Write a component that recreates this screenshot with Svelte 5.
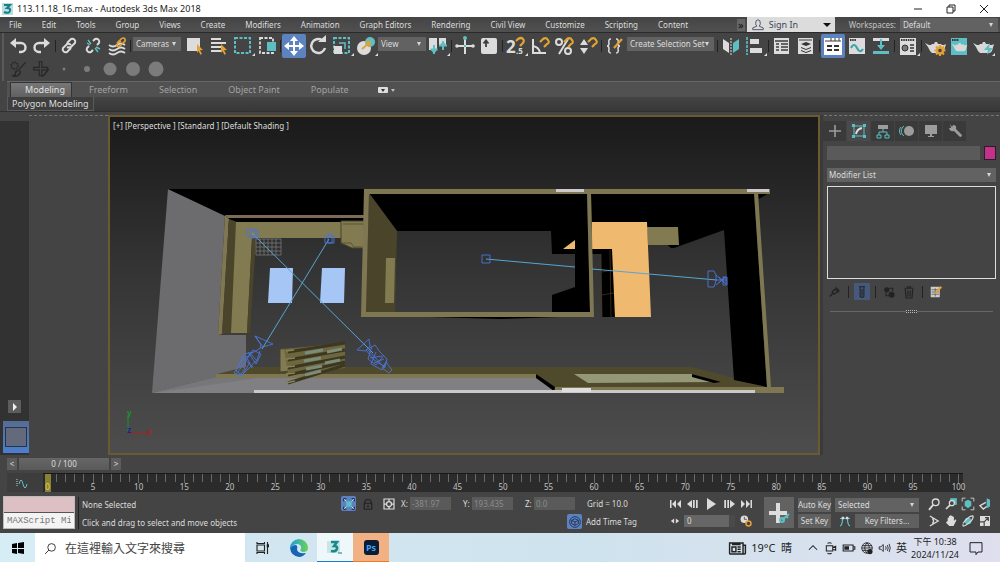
<script lang="ts">
  const menus = ['File', 'Edit', 'Tools', 'Group', 'Views', 'Create', 'Modifiers', 'Animation', 'Graph Editors', 'Rendering', 'Civil View', 'Customize', 'Scripting', 'Content'];
  const ribbonTabs = ['Modeling', 'Freeform', 'Selection', 'Object Paint', 'Populate'];
  const frames = Array.from({ length: 101 }, (_, i) => i);
  const panelTabs = ['create', 'modify', 'hierarchy', 'motion', 'display', 'utilities'];
  const brushes = [3, 6, 13, 14, 15];

  // "|" is a separator, "sel:" a drop-down, everything else an icon button
  const toolbar = [
    'undo', 'redo', '|', 'link', 'unlink', 'bind', '|', 'sel:Cameras', 'pick', 'byname', 'rect', 'window', '|',
    'move', 'rotate', 'scale', 'place', 'sel:View', 'pivot', '|', 'manipulate', 'keyboard', '|',
    'snap', 'angle', 'percent', 'spinner', '|', 'editsets', 'sel:Create Selection Set', '|', 'mirror', 'align', '|',
    'explorer', 'layers', '|', 'ribbon', 'curve', 'schematic', '|', 'material', '|', 'rsetup', 'rframe', 'render'
  ];
  const flyouts = ['rect', 'scale', 'place', 'pivot', 'snap', 'align', 'material', 'render'];
  const activeTools = ['move', 'ribbon'];

  const T = '#5dbfc4';
  const A = '#e3a233';
  const teapot = '<path fill="#d8d8d8" d="M2 9l4 2h2l1-1h2l1-2h2l1 2h3l1 1h2l2-1-2 7-2 2H9l-2-2-2-4z"/>';

  const icons: Record<string, string> = {
    undo: '<path d="M8 9h7a4 4 0 0 1 0 9h-2" fill="none" stroke="currentColor" stroke-width="2.4"/><path d="M4 9l6-5v10z"/>',
    redo: '<path d="M16 9H9a4 4 0 0 0 0 9h2" fill="none" stroke="currentColor" stroke-width="2.4"/><path d="M20 9l-6-5v10z"/>',
    link: '<g fill="none" stroke="currentColor" stroke-width="2"><path d="M10 9l4-4a3 3 0 0 1 4 4l-4 4q-2 1-4 0"/><path d="M14 11q-2-2-4-1l-4 4a3 3 0 0 0 4 4l4-4"/></g>',
    unlink: `<g fill="none" stroke="currentColor" stroke-width="2"><path d="M12 7l2-2a3 3 0 0 1 4 4l-2 2M8 12l-2 2a3 3 0 0 0 4 4l2-2"/></g><path d="M7 6l3 4M6 9l3 2M14 14l3 4M15 13l4 2" stroke="${T}" stroke-width="1.4"/>`,
    bind: `<path d="M4 11q4 3 8 0t8 0M4 15q4 3 8 0t8 0M4 19q4 3 8 0t8 0" fill="none" stroke="currentColor" stroke-width="1.8"/><path d="M12 9l4-4q3-2 4 0t-2 4l-3 3q-2 1-3 0t1-3l3-2" fill="none" stroke="${A}" stroke-width="1.6"/>`,
    pick: `<path d="M4 4h13v13H4z"/><path d="M14 10l6 6-3 .2 2 3.8-1.6.8-1.9-3.8-1.5 2z" fill="${A}"/>`,
    byname: `<path d="M4 4h10v2H4zM4 8h15v2H4zM4 12h10v2H4zM4 16h10v2H4z"/><path d="M14 10l6 6-3 .2 2 3.8-1.6.8-1.9-3.8-1.5 2z" fill="${A}"/>`,
    rect: `<path d="M4 4h15v15H4z" fill="none" stroke="${T}" stroke-width="2" stroke-dasharray="3 1.5"/>`,
    window: `<path d="M5 4h13v15H5z" fill="none" stroke="currentColor" stroke-width="1.8" stroke-dasharray="3 1.5"/><path d="M12 8h9v9h-9z" fill="${T}"/>`,
    move: '<path d="M11 7h2v4h4V8l5 4-5 4v-3h-4v4h3l-4 5-4-5h3v-4H7v3l-5-4 5-4v3h4V7H8l4-5 4 5z"/>',
    rotate: '<path d="M16 6a7 7 0 1 0 3 8" fill="none" stroke="currentColor" stroke-width="2.5"/><path d="M12 8h8V1z"/>',
    scale: `<path d="M4 4h15v15H4z" fill="none" stroke="${T}" stroke-width="2" stroke-dasharray="3 1.5"/><path d="M4 12h8v8H4z"/><path d="M9 9h6v6" fill="none" stroke="${T}" stroke-width="1.5"/>`,
    place: `<circle cx="10" cy="14" r="7"/><circle cx="16" cy="8" r="5" fill="${T}"/><path d="M8 15l7-6M11 8l5 0-1 5" fill="none" stroke="${A}" stroke-width="1.8"/>`,
    pivot: `<path d="M3 4h8v12H3zM13 4h7v8h-7z"/><path d="M8 11v9M4.500 15.500h7M17 7v9M13 11.500h8" stroke="${T}" stroke-width="2"/><path d="M5 16h6l-3 4zM14 11h6l-3-4z" fill="${T}"/>`,
    manipulate: `<path d="M11 4h2v7h7v2h-7v7h-2v-7H4v-2h7z"/><circle cx="12" cy="4" r="2" fill="${T}"/><circle cx="20" cy="12" r="1.8"/><circle cx="4" cy="12" r="1.8"/><path d="M11 11h2v2h-2z" fill="${T}"/>`,
    keyboard: '<rect x="4" y="4" width="16" height="16" rx="2"/><path d="M9 13V7M6.500 9.500l2.500-3 2.500 3" fill="none" stroke="#3d3d3d" stroke-width="1.8"/>',
    snap: `<text x="2" y="19" font-size="17" font-weight="700" fill="currentColor">2</text><text x="12" y="20" font-size="8" font-weight="700" fill="currentColor">.5</text><path d="M12 7l2-2q3-2 5 0t-1 5l-2 2" fill="none" stroke="${A}" stroke-width="2.2"/>`,
    angle: `<path d="M5 5v14h13M5 12q6 1 7 7" fill="none" stroke="currentColor" stroke-width="2"/><path d="M12 8l3-3q3-2 5 1t-1 4l-3 3" fill="none" stroke="${A}" stroke-width="2.2"/>`,
    percent: `<g fill="none" stroke="currentColor" stroke-width="2"><circle cx="7" cy="8" r="3"/><circle cx="16" cy="17" r="3"/><path d="M16 5L7 20"/></g><path d="M12 8l3-3q3-2 5 1t-1 4l-3 3" fill="none" stroke="${A}" stroke-width="2.2"/>`,
    spinner: `<path d="M4 11l4-6 4 6zM4 14h8l-4 6z"/><path d="M12 8l3-3q3-2 5 1t-1 4l-3 3" fill="none" stroke="${A}" stroke-width="2.2"/>`,
    editsets: `<path d="M8 5Q5 5 6 9q0 3-2 3 2 0 2 3-1 4 2 4M13 5q3 0 2 4 0 3 2 3-2 0-2 3 1 4-2 4" fill="none" stroke="currentColor" stroke-width="1.5"/><path d="M11 14l8-9" stroke="${A}" stroke-width="2.2"/>`,
    mirror: `<path d="M4 5l6 4v10l-6-4z"/><path d="M12 4v17" stroke="currentColor" stroke-dasharray="2 1"/><path d="M14 9l6-4v10l-6 4z" fill="${T}"/>`,
    align: `<path d="M4 3v18" stroke="${T}" stroke-width="1.6" stroke-dasharray="3 1"/><path d="M7 5h9v5H7zM7 14h12v5H7z"/>`,
    explorer: '<path d="M4 4h15v16H4z"/><path d="M5 7h13M6 10h3M11 10h7M6 13h3M11 13h7M6 16h3M11 16h7" stroke="#3d3d3d" stroke-width="1.4"/>',
    layers: '<path d="M4 4h15v16H4z"/><path d="M5 6h13" stroke="#3d3d3d"/><path d="M12 8l5 2-5 2-5-2zM7 13l5 2 5-2v1l-5 2-5-2zM7 16l5 2 5-2v1l-5 2-5-2z" fill="#333"/>',
    ribbon: '<path d="M3 4h18v17H3z"/><path d="M10 4v3H4M10 7h10M14 4v3M18 4v3" fill="none" stroke="#3d3d3d"/><path d="M6 12h5M6 16h5M13 12h5M13 16h5" stroke="#333" stroke-width="2"/>',
    curve: `<path d="M4 4h16v16H4z"/><path d="M5 6h6" stroke="#333" stroke-width="2" stroke-dasharray="1.5 .7"/><path d="M6 14q3-6 6 0t6 1" fill="none" stroke="#3ba5ab" stroke-width="2.2"/>`,
    schematic: `<path d="M4 4h16v3H4z"/><path d="M4 17h16v3H4zM11 5h2v6h3l-4 5-4-5h3z" fill="${T}"/>`,
    material: '<path d="M4 4h16v17H4z"/><path d="M5 6h14" stroke="#333" stroke-width="2" stroke-dasharray="1.5 .8"/><circle cx="9" cy="14" r="3" fill="#777" stroke="#333"/><path d="M14 11h4M14 14h4M14 17h4" stroke="#333" stroke-width="1.4"/>',
    rsetup: `${teapot}<path d="M17 11v11M11.500 16.500h11M13 12.500l8 8M21 12.500l-8 8" stroke="${A}" stroke-width="2"/><circle cx="17" cy="16.500" r="3" fill="#444" stroke="${A}" stroke-width="2.400"/>`,
    rframe: `<path d="M4 4h16v17H4z" fill="${T}"/><path d="M5 6h7" stroke="#333" stroke-width="2" stroke-dasharray="1.5 .7"/><g transform="translate(3 3) scale(.75)">${teapot}</g>`,
    render: `${teapot}<path d="M19 9l-6 7h4l-1 5 6-7h-4z" fill="${T}"/>`,
    create: '<path d="M12 6v12M6 12h12" stroke="currentColor" stroke-width="1.6"/>',
    modify: `<path d="M7 7h10v10H7z" fill="none" stroke="${T}"/><path d="M5 5h3v3H5zM16 5h3v3h-3zM5 16h3v3H5zM16 16h3v3h-3z" fill="${T}"/><path d="M9 15q1-5 6-6" fill="none" stroke="#ddd" stroke-width="2"/>`,
    hierarchy: `<path d="M7 6h10v4H7z"/><path d="M12 10v3M8 16v-3h8v3M6 16h4v3H6zM14 16h4v3h-4z" fill="none" stroke="${T}"/>`,
    motion: `<circle cx="14" cy="12" r="5"/><path d="M9 7a6 6 0 0 0 0 10M6 8a6 6 0 0 0 0 8" fill="none" stroke="${T}"/>`,
    display: '<path d="M6 6h12v9H6zM11 15h2v2h2v1H9v-1h2z"/>',
    utilities: '<path d="M7 5l2 3 1-2q4 0 3 4l6 6q0 2-2 2l-6-6q-4 1-5-3l2 0z"/>',
    pin: '<path d="M13 6l5 5M12 8l4 4-3 1-2 2-3-3 2-2zM9 14l-4 4" fill="none" stroke="currentColor" stroke-width="1.6"/>',
    tube: '<path d="M8 5h8M9.500 5v13q2.500 2 5 0V5M12 8v9" fill="none" stroke="currentColor" stroke-width="1.4"/>',
    unique: '<circle cx="9" cy="9" r="3.500"/><path d="M12 7h5v4M8 13v4h4" fill="none" stroke="currentColor" stroke-width="1.400"/><circle cx="15.500" cy="15.500" r="4"/>',
    trash: '<path d="M6 7h12M10 7V5h4v2M7 8l1 12h8l1-12M10.500 10v8M13.500 10v8" fill="none" stroke="currentColor" stroke-width="1.5"/>',
    config: `<path d="M5 5h12v14H5z" fill="#ccc"/><path d="M6 9h10M6 12h10M6 15h10M11 7v11" stroke="#555"/><path d="M11 14l8-9" stroke="${A}" stroke-width="2.600"/>`,
    cube: '<g fill="none" stroke="#1e2d4d" stroke-width="1.300"><circle cx="12" cy="12" r="8"/><path d="M7 9.500l5-2.500 5 2.500v5L12 17l-5-2.500zM7 9.500l5 2.500 5-2.500M12 12v5"/></g>',
    isolate: `<path d="M4 8V4h4M16 4h4v4M20 16v4h-4M8 20H4v-4" fill="none" stroke="#1d2b45" stroke-width="1.500"/><path d="M8 8h8v8H8z" fill="${T}"/><path d="M5 5l3 3M19 5l-3 3M5 19l3-3M19 19l-3-3" stroke="#ddd" stroke-width="1.500"/>`,
    lock: '<path d="M8 11V9a4 3 0 0 1 8 0v2M7 11h10v8H7zM12 13v4" fill="none" stroke="currentColor" stroke-width="1.6"/>',
    absolute: '<path d="M6 6h12v12H6z" fill="none" stroke="currentColor" stroke-width="1.400"/><circle cx="12" cy="12" r="3" fill="none" stroke="currentColor" stroke-width="1.500"/><path d="M12 6v3M12 15v3M6 12h3M15 12h3" stroke="currentColor" stroke-width="1.500"/>',
    start: '<path d="M7 8h1.5v8H7zM13 8v8l-4-4zM18 8v8l-4-4z"/>',
    prev: '<path d="M11 8v8l-5-4zM12 8h1.7v8H12zM15 8h1.7v8H15z"/>',
    play: '<path d="M8 6l9 6-9 6z"/>',
    next: '<path d="M13 8v8l5-4zM10.300 8H12v8h-1.700zM7.300 8H9v8H7.300z"/>',
    end: '<path d="M17 8h-1.500v8H17zM11 8v8l4-4zM6 8v8l4-4z"/>',
    keymode: '<path d="M11 9v6l-4-3zM13 9v6l4-3z"/>',
    timecfg: `<circle cx="10" cy="10" r="4.500"/><path d="M10 7v3h3" fill="none" stroke="#444"/><circle cx="15" cy="15" r="3" fill="#444" stroke="${A}" stroke-width="1.800"/>`,
    tangent: `<path d="M6 18q3-1 3-9h6q0 8 3 9M6 9h12" fill="none" stroke="${T}" stroke-width="1.400"/><path d="M8 7h3v3H8zM13 7h3v3h-3z"/>`,
    zoom: '<circle cx="14" cy="10" r="4" fill="none" stroke="currentColor" stroke-width="1.600"/><path d="M11 13l-5 6" stroke="currentColor" stroke-width="2.200"/>',
    zoomall: `<path d="M11 5h8v8h-8z" fill="${T}"/><circle cx="13" cy="11" r="3" fill="#444" stroke="currentColor" stroke-width="1.500"/><path d="M11 13l-5 5" stroke="currentColor" stroke-width="2"/>`,
    extents: `<path d="M5 9V5h4M15 5h4v4M19 15v4h-4M9 19H5v-4" fill="none" stroke="currentColor"/><path d="M12 7l4 2v5l-4 3-4-3V9z" fill="${T}"/>`,
    extall: `<path d="M14 5l4 2v8l-4 2z" fill="${T}"/><path d="M13 10l-7 4 4 4 4-3" fill="none" stroke="currentColor" stroke-width="1.600"/>`,
    fov: '<path d="M7 6l10 6-10 6M10 9q3 3 0 6" fill="none" stroke="currentColor" stroke-width="1.600"/>',
    pan: '<path d="M8 12V8h1.500V6H11V5h1.500v1H14v1h1.500v5l1.500-2 1.500 1-3.500 7h-5L6 14l1-1.500z"/>',
    orbit: `<circle cx="12" cy="12" r="4" fill="${T}"/><path d="M6 16q-1 4 5 0 6-4 7-8t-4-1-8 8" fill="none" stroke="currentColor" stroke-width="1.500"/>`,
    maxtoggle: '<path d="M6 6h12v12H6z"/><path d="M12 8h4v4M16 8l-5 5M6 13h5v5" fill="none" stroke="#444" stroke-width="1.400"/>',
    paint: '<circle cx="8" cy="8" r="4" fill="none" stroke="currentColor" stroke-width="2" stroke-dasharray="2 1"/><path d="M21 4l-9 10M12 14q-3 0-3 3t-4 3q5 2 8-1t1-5" fill="none" stroke="currentColor" stroke-width="1.600"/>',
    addpaint: '<path d="M10 3h3v7h7v3h-7v7h-3v-7H3v-3h7z" fill="none" stroke="currentColor" stroke-width="1.300"/><path d="M21 12l-5 7-3 2" fill="none" stroke="currentColor" stroke-width="1.800"/>',
    chevron: '<path d="M5 15l7-7 7 7" fill="none" stroke="currentColor" stroke-width="1.800"/>',
    meet: '<g fill="none" stroke="currentColor" stroke-width="1.800"><path d="M4 8h11v9H4zM15 11l5-2v7l-5-2M6 4q4-2 7 0M6 21q4 2 7 0"/></g>',
    battery: '<path d="M2 7h17v10H2zM20 10h2v4h-2" fill="none" stroke="currentColor" stroke-width="1.800"/><path d="M4 9h8v6H4z"/>',
    globe: '<g fill="none" stroke="currentColor" stroke-width="1.500"><circle cx="12" cy="12" r="9"/><path d="M3 12h18M4 8h16M4 16h16M12 3q-8 9 0 18M12 3q4 4 4 9"/></g><circle cx="17" cy="18" r="4.500"/>',
    volume: '<g fill="none" stroke="currentColor" stroke-width="1.500"><path d="M2 10h3l4-4v12l-4-4H2zM13 9q2 3 0 6M16 7q3 5 0 10M19 5q4 7 0 14"/></g>',
    news: '<g fill="none" stroke="currentColor" stroke-width="1.800"><path d="M2 5h17v14H3q-1 0-1-1zM19 8h3v10q0 1-3 1M5 10h5v6H5zM5 7h11M12 10h4M12 13h4M12 16h4"/></g>',
    notice: '<path d="M3 4h18v14h-6l-3 4v-4H3z" fill="none" stroke="currentColor" stroke-width="1.500"/>',
    taskview: '<g fill="none" stroke="currentColor" stroke-width="1.500"><path d="M4 8h10v8H4zM4 4v2h10V4M4 20v-2h10v2M18 4v16"/></g><path d="M17 7h3v4h-3z"/>',
    search: '<circle cx="14" cy="10" r="7" fill="none" stroke="currentColor" stroke-width="1.600"/><path d="M9 15l-7 7" stroke="currentColor" stroke-width="1.600"/>',
    user: '<path d="M12 3q4 0 4 6 0 3-2 5l7 3v3H3v-3l7-3q-2-2-2-5 0-6 4-6z" fill="none" stroke="#4a5164" stroke-width="1.600"/>'
  };
</script>

{#snippet icon(name: string, size = 24)}
  <svg width={size} height={size} viewBox="0 0 24 24" fill="currentColor" aria-hidden="true">{@html icons[name]}</svg>
{/snippet}

<div class="app">
  <header class="titlebar">
    <svg width="11" height="12" viewBox="0 0 11 12"><path fill="#b9dfe0" d="M0 0h11v12H0z" /><path fill="none" stroke="#177f88" stroke-width="2" d="M2 2h6L5 5q4 0 3 3T2 9" /></svg>
    <h1>113.11.18_16.max - Autodesk 3ds Max 2018</h1>
    <div class="window_buttons">
      <button aria-label="Minimize"><svg width="10" height="10"><path d="M1 5h8" /></svg></button>
      <button aria-label="Restore"><svg width="10" height="10"><path d="M1 3h6v6H1zM3 3V1h6v6H7" /></svg></button>
      <button aria-label="Close"><svg width="10" height="10"><path d="M1 1l8 8M9 1L1 9" /></svg></button>
    </div>
  </header>

  <nav class="menubar">
    <div class="menus">
      {#each menus as item}
        <button>{item}</button>
      {/each}
    </div>
    <button class="more" aria-label="More menus">»</button>
    <button class="signin">{@render icon('user', 14)}<span>Sign In</span><i class="arrow"></i></button>
    <label for="workspace">Workspaces:</label>
    <span class="select workspace"><select id="workspace"><option>Default</option></select></span>
  </nav>

  <div class="toolbar">
    {#each toolbar as tool}
      {#if tool === '|'}
        <i class="sep"></i>
      {:else if tool.startsWith('sel:')}
        <span class="select" class:wide={tool.length > 15}>
          <select aria-label={tool.slice(4)}><option>{tool.slice(4)}</option></select>
        </span>
      {:else}
        <button class="tool" class:active={activeTools.includes(tool)} class:flyout={flyouts.includes(tool)} aria-label={tool}>{@render icon(tool)}</button>
      {/if}
    {/each}
  </div>

  <div class="brushbar">
    <button class="tool" aria-label="Paint">{@render icon('paint', 20)}</button>
    <button class="tool" aria-label="Add">{@render icon('addpaint', 20)}</button>
    {#each brushes as size}
      <button class="tool" aria-label="Brush {size}"><svg width="20" height="20"><circle cx="10" cy="10" r={size / 2} /></svg></button>
    {/each}
  </div>

  <div class="ribbon">
    <div class="ribbon_tabs">
      {#each ribbonTabs as tab, i}
        <button class:current={i === 0}>{tab}</button>
      {/each}
      <button class="ribbon_toggle" aria-label="Toggle ribbon"><svg width="18" height="8"><rect width="10" height="6" y="1" rx="1" fill="#ddd" /><path d="M3 3h4L5 6z" fill="#333" /><path d="M13 3h4l-2 3z" fill="#bbb" /></svg></button>
    </div>
    <div class="ribbon_body"><button>Polygon Modeling</button></div>
  </div>

  <main>
    <aside class="strip">
      <button class="expand" aria-label="Expand"><svg width="6" height="8"><path d="M1 0l4 4-4 4z" fill="#eee" /></svg></button>
      <button class="layout" aria-label="Viewport layout"><span></span></button>
    </aside>
    <div class="gutter"></div>

    <section class="viewport">
      <p>[+] [Perspective ] [Standard ] [Default Shading ]</p>
      <svg class="scene" viewBox="110 117 708 336">
        <!-- side wall and outer slab -->
        <path fill="#6c6c6e" d="M168 189l57 26-7 120h28v34l-29 8-65 16z" />
        <path fill="#808082" d="M152 393l65-16h320l19 16z" />
        <path fill="#777779" d="M152 393l65-16 40 1-40 6z" />
        <path fill="#000" d="M168 189h197v27H225z" />
        <!-- left room cabinets -->
        <path fill="#000" d="M226 216h138v12H228z" />
        <path fill="#7e7751" d="M225 215l4 4-7 115-4 1z" />
        <path fill="#7e6a58" d="M225 215h139v3H228z" />
        <path fill="#4a452a" d="M229 219l8 3-6 111-9 1z" />
        <path fill="#827a50" d="M236 222h105v16h-89l-5 95h-16z" />
        <path fill="#4a452a" d="M252 238l4 1-6 94-19 1 16-1z" />
        <path fill="#827a50" stroke="#4a452a" d="M341 221h23v27h-12l-11-5z" />
        <path fill="none" stroke="#5b5432" d="M343 224h21M341 243h10l3 4h10" />
        <path fill="none" stroke="#8b8b8b" stroke-width=".6" d="M256 239h25v16h-25zM260 239v16M264 239v16M268 239v16M272 239v16M276 239v16M256 243h25M256 247h25M256 251h25" />
        <path fill="#a6c7f5" d="M270 268h23l-1 35h-24zM322 268h23l-1 35h-24z" />
        <!-- front wall -->
        <path fill="#4f4a2c" d="M217 374l28-7h447l76 20-213 1-18-13z" />
        <path fill="#7e7751" d="M216 374h321v4H216zM555 387h229v6H555z" />
        <path fill="#000" d="M536 374l19 13-1 4-18-13z" />
        <path fill="#949778" d="M574 374h118l25 8-129 1z" />
        <path fill="#000" d="M692 374l29 8-7 1-22-6z" />
        <path fill="#c9c9c9" d="M254 390h501v3H254z" />
        <path fill="#dedede" d="M562 388h29v4h-29z" />
        <!-- middle room -->
        <path fill="#000" d="M369 193h218l3 120h-38v-18l23-8v-33h-23l-1-23H397z" />
        <path fill="#4a452a" d="M369 193l28 38-2 82h-29z" />
        <path fill="#827a50" d="M386 258h9l-1 45h-9z" />
        <path fill="#efb970" d="M563 249l12-9v9z" />
        <path fill="#000" d="M430 317h130l-60 2z" />
        <!-- right room -->
        <path fill="#000" d="M591 193h163l13 194-33-7-10-150-50 18h-3l-22-20h-57z" />
        <path fill="#827a50" d="M647 227h31l1 18h-31z" />
        <path fill="#000" d="M592 249h21l2 68h-13l-1-63h-9z" />
        <path fill="none" stroke="#57402a" stroke-width=".6" d="M601 254l1 63M610 250l1 67M602 295l12-2M602 272l10-2" />
        <path fill="#efb970" d="M592 222h55l4 95h-36l-3-68h-20z" />
        <path fill="#000" d="M758 193h11l-10 6z" />
        <path fill="#7e7751" d="M364 189h406v5H369l-3 118h224l-3-119h4l3 124H361zM754 193h4l13 194h-4z" />
        <path fill="#cdc9cc" d="M556 189h28v3h-28zM747 189h22v3h-22z" />
        <!-- leaning panels -->
        <path fill="#827a50" stroke="#4a452a" d="M280 349l13-1-3 23-10 1z" />
        <path fill="#6d663f" d="M284 349l61-6v25l-57 6z" />
        <path stroke="#3c3820" stroke-width="3" d="M288 352l57-9M288 360l57-10M288 368l57-11M288 375l57-13M288 383l57-18" />
        <path stroke="#7d8c78" stroke-width="3" d="M305 353l18-3M327 352l15-3M304 361l17-3M306 369l16-3M325 363l15-3M305 375l16-4" />
        <path stroke="#8a8156" stroke-width="1.500" d="M286 351l8-1M286 359l9-1M286 367l9-1M286 374l9-1M286 383l9-2" />
        <!-- cameras with their targets -->
        <path fill="none" stroke="#57a5d3" d="M252 233l121 120M329 239l-67 110M486 259l89 8M592 269l125 11" />
        <g fill="none" stroke="#4c74d8" stroke-width=".9">
          <path d="M247 229h9v7h-9zM250 231h8v7h-8zM325 236h9v7h-9zM328 234h4v9h-4zM482 255h8v8h-8z" />
          <path d="M255 336l18 8-10 3zM255 336l6 9-1 3M262 347l-8 5-10 2-8 17 6 4 15-15 3-9M248 352l8 12 5-10-8-4-12 18-5 6 6 2 8-14M243 358l10 9M239 363l14-11M234 373l5-8 6 3-5 8zM246 356l6 12M250 353l8 9" />
          <path d="M369 339l-12 11 9 1 4-5zM366 350l9-5 5 7 7 7-2 8-11-7-8-10M368 350l17 18M372 346l-4 13 8 6 8-10M376 352l-5 12 11 6 5-9M382 368l4-6 6 8-3 3zM370 358l12-2M374 363l10-4" />
          <path d="M708 271h6l2 4v6l-2 6h-6zM716 275l10 9v-7l-10 8M715 280h12v-3h-4v8h4v-5M719 277l5 6M719 283l5-6" />
        </g>
        <!-- axis tripod -->
        <path stroke="#1c8f2a" d="M128 433v-18" /><path stroke="#a02525" d="M128 433h20" />
        <text x="127" y="416" fill="#1c8f2a">y</text><text x="147" y="435" fill="#a02525">x</text><text x="127" y="433" fill="#2020a0">z</text>
      </svg>
    </section>

    <aside class="panel">
      <div class="grip"></div>
      <div class="panel_tabs">
        {#each panelTabs as tab}
          <button class:current={tab === 'modify'} aria-label={tab}>{@render icon(tab)}</button>
        {/each}
      </div>
      <div class="name_row">
        <input aria-label="Object name" />
        <button class="swatch" aria-label="Object colour"></button>
      </div>
      <span class="select modifier"><select aria-label="Modifier List"><option>Modifier List</option></select></span>
      <div class="stack"></div>
      <div class="stack_tools">
        <button aria-label="Pin stack">{@render icon('pin', 18)}</button><i class="sep"></i>
        <button class="active" aria-label="Show end result">{@render icon('tube', 18)}</button><i class="sep"></i>
        <button aria-label="Make unique">{@render icon('unique', 18)}</button>
        <button aria-label="Remove modifier">{@render icon('trash', 18)}</button><i class="sep"></i>
        <button aria-label="Configure sets">{@render icon('config', 18)}</button>
      </div>
      <div class="rollup"><span></span></div>
    </aside>
  </main>

  <div class="timeslider">
    <button aria-label="Previous frame">&lt;</button>
    <button class="thumb">0 / 100</button>
    <button aria-label="Next frame">&gt;</button>
  </div>

  <div class="trackbar">
    <button class="mini_curve" aria-label="Mini curve editor"><svg width="12" height="10"><path d="M1 1v8" stroke="#ccc" stroke-dasharray="1 1" /><path d="M3 6q2-8 4 0t4 0" fill="none" stroke="#5dbfc4" /></svg></button>
    <div class="track">
      {#each frames as f}
        <span class:major={f % 5 === 0} class:now={f === 0}>{f % 5 === 0 ? f : ''}</span>
      {/each}
    </div>
  </div>

  <footer class="status">
    <div class="script">
      <div class="macro"></div>
      <input aria-label="MAXScript listener" value="MAXScript Mini Listener" />
    </div>
    <div class="prompt">
      <p>None Selected</p>
      <p>Click and drag to select and move objects</p>
    </div>
    <div class="coords">
      <div class="coord_row">
        <button class="active" aria-label="Isolate">{@render icon('isolate', 16)}</button>
        <button class="dim" aria-label="Lock">{@render icon('lock', 18)}</button>
        <button aria-label="Absolute mode">{@render icon('absolute', 20)}</button>
        <label for="cx">X:</label><input id="cx" value="-381.97" />
        <label for="cy">Y:</label><input id="cy" value="193.435" />
        <label for="cz">Z:</label><input id="cz" value="0.0" />
        <span>Grid = 10.0</span>
      </div>
      <div class="tag_row">
        <button class="active" aria-label="Adaptive degradation">{@render icon('cube', 16)}</button>
        <button class="tag">Add Time Tag</button>
      </div>
    </div>
    <div class="playback">
      <div class="row">
        {#each ['start', 'prev', 'play', 'next', 'end'] as b}
          <button aria-label={b}>{@render icon(b)}</button>
        {/each}
      </div>
      <div class="row">
        <button aria-label="Key mode">{@render icon('keymode', 20)}</button>
        <input type="text" aria-label="Current frame" value="0" />
        <button aria-label="Time configuration">{@render icon('timecfg', 20)}</button>
      </div>
    </div>
    <button class="setkeys" aria-label="Set keys"><svg width="30" height="30"><path fill="#ddd" d="M12 5h4v8h7v4h-7v8h-4v-8H5v-4h7z" /><path fill="none" stroke="#5dbfc4" stroke-width="2" d="M25 16l-7 6M22 18l2 2" /><circle cx="18" cy="22" r="2" fill="none" stroke="#5dbfc4" stroke-width="2" /></svg></button>
    <div class="keys">
      <button>Auto Key</button>
      <span class="select"><select aria-label="Key set"><option>Selected</option></select></span>
      <button>Set Key</button>
      <div class="filters"><button class="plain" aria-label="Tangents">{@render icon('tangent', 20)}</button><button class="fill">Key Filters...</button></div>
    </div>
    <div class="nav">
      {#each ['zoom', 'zoomall', 'extents', 'extall', 'fov', 'pan', 'orbit', 'maxtoggle'] as n}
        <button aria-label={n}>{@render icon(n, 20)}</button>
      {/each}
    </div>
  </footer>

  <div class="taskbar">
    <button class="start" aria-label="Start"><svg width="12" height="12"><path d="M0 2l5-1v5H0zM6 1l6-1v6H6zM0 7h5v5l-5-1zM6 7h6v5l-6-1z" /></svg></button>
    <label class="search">{@render icon('search', 13)}<input placeholder="在這裡輸入文字來搜尋" aria-label="搜尋" /></label>
    <button class="app_button" aria-label="Task view">{@render icon('taskview', 18)}</button>
    <button class="app_button" aria-label="Edge">
      <svg width="18" height="18" viewBox="0 0 18 18">
        <defs><linearGradient id="edge"><stop stop-color="#1e9be0" /><stop offset="1" stop-color="#6ad352" /></linearGradient></defs>
        <path fill="url(#edge)" d="M0 9a9 9 0 0 1 18 0q0 4-5 4-4-1-2-3 1-4-3-5-5 0-8 4z" />
        <path fill="#1565b5" d="M0 9q2-3 6-3 2 1 1 4 0 5 9 4-3 4-7 4-8-1-9-9z" />
      </svg>
    </button>
    <button class="app_button max" aria-label="3ds Max"><svg width="16" height="16"><path fill="#c8e6e6" d="M0 2h13v12H0z" /><path fill="none" stroke="#188a8f" stroke-width="2.500" d="M4 3h6L7 7q4 0 3 3t-6 2" /><path fill="#7bb" d="M11 13h4v2h-4z" /></svg></button>
    <button class="app_button ps"><span>Ps</span></button>
    <div class="tray">
      {@render icon('news', 19)}
      <span class="weather">19°C&nbsp; 晴</span>
      {@render icon('chevron', 14)}
      {@render icon('meet', 14)}
      {@render icon('battery', 14)}
      {@render icon('globe', 14)}
      {@render icon('volume', 14)}
      <span class="ime">英</span>
      <time>下午 10:38<br />2024/11/24</time>
      <button aria-label="Notifications">{@render icon('notice', 16)}</button>
    </div>
  </div>
</div>

<style>
  :global(body) {
    background: #444;
  }

  .app {
    display: flex;
    flex-direction: column;
    min-height: 100vh;
    overflow: hidden;
    background: #444;
    color: #dcdcdc;
    font-family: "Noto Sans", "Noto Sans CJK TC", sans-serif;
    font-size: 8px;
    line-height: 12px;
  }

  button, input, select {
    margin: 0;
    padding: 0;
    border: 0;
    border-radius: 0;
    background: none;
    color: inherit;
    font: inherit;
    min-width: 0;
    box-sizing: border-box;
  }

  button {
    display: flex;
    align-items: center;
    justify-content: center;
    white-space: nowrap;
  }

  svg {
    display: block;
    flex: none;
  }

  h1, p {
    margin: 0;
    font-weight: 400;
  }

  .titlebar {
    display: flex;
    align-items: center;
    gap: 4px;
    height: 17px;
    padding-left: 2px;
    background: #fff;
    color: #222;
  }

  h1 {
    font-size: 9px;
  }

  .window_buttons {
    display: flex;
    margin-left: auto;
  }

  .window_buttons button {
    width: 33px;
    height: 16px;
  }

  .window_buttons path {
    fill: none;
    stroke: #222;
  }

  .menubar {
    display: flex;
    align-items: center;
    height: 16px;
    box-sizing: border-box;
    border-bottom: 1px solid #2a2a2a;
    background: linear-gradient(#454545, #505050);
  }

  .menus {
    display: flex;
    flex: 1;
    gap: 20px;
    padding-left: 9px;
  }

  .more {
    width: 8px;
    font-size: 11px;
    background: #666;
    color: #111;
  }

  .signin {
    width: 88px;
    height: 15px;
    margin: 0 14px 0 2px;
    padding: 0 4px;
    gap: 4px;
    background: #dcdcdc;
    color: #3d4556;
    font-size: 9px;
  }

  .arrow {
    margin-left: auto;
    border: 4px solid transparent;
    border-top-color: #111;
    border-bottom: 0;
  }

  .menubar label {
    margin-right: 4px;
    color: #c4c4c4;
  }

  .select {
    position: relative;
    display: block;
    width: 48px;
    height: 14px;
    background: #626262;
  }

  .select::after {
    content: "";
    position: absolute;
    right: 5px;
    top: 5px;
    border: 2px solid transparent;
    border-top: 4px solid #d5d5d5;
    border-bottom: 0;
    pointer-events: none;
  }

  .select select {
    width: 100%;
    height: 100%;
    padding: 0 8px 0 3px;
    appearance: none;
  }

  .select.workspace {
    width: 98px;
    margin-right: 2px;
  }

  .toolbar {
    display: flex;
    align-items: center;
    height: 26px;
    padding-left: 6px;
    background: linear-gradient(90deg, transparent 2px, #5a5a5a 2px, #5a5a5a 4px, transparent 4px);
  }

  .toolbar .select {
    flex: none;
    margin-bottom: 4px;
  }

  .toolbar .select:nth-child(8) {
    margin-left: 1px;
    margin-right: 2px;
  }

  .toolbar .select.wide {
    width: 87px;
    margin-right: 2px;
  }

  .tool {
    position: relative;
    flex: none;
    width: 24px;
    height: 24px;
  }

  .tool.active {
    border-radius: 2px;
    background: #5c83bf;
    color: #fff;
  }

  .flyout::after {
    content: "";
    position: absolute;
    right: 0;
    bottom: 2px;
    border-left: 3px solid transparent;
    border-bottom: 3px solid #ddd;
  }

  .sep {
    flex: none;
    width: 1px;
    height: 12px;
    margin: 0 1px;
    background: #222;
  }

  .brushbar {
    display: flex;
    align-items: center;
    height: 22px;
    padding-left: 6px;
    color: #272727;
    background: linear-gradient(90deg, transparent 2px, #5a5a5a 2px, #5a5a5a 4px, transparent 4px);
  }

  .brushbar .tool {
    width: 23px;
    height: 20px;
    margin-bottom: 2px;
  }

  .brushbar circle {
    fill: #7b7b7b;
  }

  .ribbon {
    padding-left: 7px;
    font-size: 9px;
  }

  .ribbon_tabs {
    display: flex;
    box-sizing: border-box;
    height: 16px;
    padding-left: 3px;
    border-top: 1px solid #666;
    background: #515151;
    color: #a2a2a2;
  }

  .ribbon_tabs button {
    margin-right: 27px;
    padding: 0 2px;
  }

  .ribbon_tabs .current {
    margin-right: 15px;
    padding: 0 6px 0 14px;
    border: 1px solid #333;
    border-bottom: 0;
    background: linear-gradient(#777, #606060);
    color: #e0e0e0;
  }

  .ribbon_tabs .ribbon_toggle {
    margin: 0;
    padding: 0;
  }

  .ribbon_body {
    display: flex;
    height: 14px;
    background: linear-gradient(#444, #383838);
  }

  .ribbon_body button {
    padding: 0 4px;
    border: 1px solid #5b5b5b;
    border-top: 0;
    background: #3e3e3e;
  }

  main {
    display: grid;
    grid-template-columns: 29px 79px minmax(0, 1fr) 180px;
    flex: 1;
    padding-top: 3px;
    border-top: 1px solid #303030;
  }

  .strip {
    display: flex;
    flex-direction: column;
    align-items: center;
    justify-content: flex-end;
    gap: 8px;
    margin-top: 6px;
    padding-bottom: 2px;
    background: #323232;
  }

  .expand {
    width: 13px;
    height: 13px;
    background: #5c5c5c;
  }

  .layout {
    width: 26px;
    height: 32px;
    margin-left: 3px;
    background: linear-gradient(#566c93, #4c7fd0);
  }

  .layout span {
    width: 20px;
    height: 18px;
    border: 1px solid #26334d;
    background: #626a7b;
  }

  .gutter, .grip {
    border-top: 1px dashed #777;
  }

  .viewport {
    position: relative;
    border: 2px solid #6b5a31;
    background: linear-gradient(#1a1a1a, #343434 45%, #4d4d4d);
  }

  .viewport p {
    position: absolute;
    top: 3px;
    left: 3px;
    color: #ddd;
  }

  .scene {
    width: 100%;
    height: 100%;
  }

  .scene text {
    font-size: 8px;
    font-weight: 700;
  }

  .panel {
    display: flex;
    flex-direction: column;
    padding: 0 4px;
    border-left: 3px solid #3a3a3a;
  }

  .grip {
    margin: 0 -3px;
    padding-bottom: 5px;
  }

  .panel_tabs {
    display: flex;
    gap: 1px;
    margin-left: -4px;
    color: #9c9c9c;
  }

  .panel_tabs button {
    width: 23px;
    height: 20px;
    background: #3a3a3a;
  }

  .panel_tabs .current {
    background: #4a4a4a;
  }

  .name_row {
    display: flex;
    gap: 4px;
    margin: 5px 0 8px;
  }

  .name_row input {
    flex: 1;
    height: 14px;
    background: #5a5a5a;
  }

  .swatch {
    width: 12px;
    height: 14px;
    border: 1px solid #222;
    background: #c5308a;
  }

  .select.modifier {
    width: 100%;
  }

  .modifier select {
    padding-left: 2px;
  }

  .stack {
    height: 91px;
    margin-top: 4px;
    border: 1px solid #ddd;
  }

  .stack_tools {
    display: flex;
    align-items: center;
    gap: 4px;
    margin-top: 4px;
    color: #222;
  }

  .stack_tools button {
    width: 16px;
    height: 17px;
  }

  .stack_tools .active {
    background: #46597a;
  }

  .rollup {
    display: flex;
    justify-content: center;
    margin: 10px 3px 0;
    background: linear-gradient(#666, #666) center / 100% 1px no-repeat;
  }

  .rollup span {
    width: 11px;
    height: 1px;
    border-top: 1px dotted #bbb;
    border-bottom: 1px dotted #bbb;
    background: #444;
  }

  .timeslider {
    display: flex;
    align-items: center;
    gap: 2px;
    height: 18px;
    padding-left: 7px;
  }

  .timeslider button {
    width: 10px;
    height: 12px;
    background: #5c5c5c;
  }

  .timeslider .thumb {
    width: 90px;
    background: linear-gradient(#666, #5a5a5a);
  }

  .trackbar {
    display: flex;
    height: 19px;
    padding: 0 37px 0 7px;
  }

  .mini_curve {
    width: 36px;
    padding-right: 6px;
    background: #3d3d3d;
  }

  .track {
    display: flex;
    flex: 1;
    border-top: 1px solid #181818;
    background: #2b2b2b;
  }

  .track span {
    display: flex;
    flex: 1 1 0;
    justify-content: center;
    width: 0;
    padding-top: 7px;
    background: linear-gradient(#696969, #696969) center top / 1px 8px no-repeat;
    color: #c2c2c2;
    line-height: 11px;
  }

  .track .major {
    background-size: 1px 9px;
  }

  .track .now {
    background: linear-gradient(#8a8132, #8a8132) center / 6px 100% no-repeat;
    color: #e0d860;
  }

  .status {
    display: flex;
    align-items: center;
    height: 41px;
    padding: 0 7px 0 3px;
  }

  .script {
    width: 72px;
    margin-right: 3px;
    font-family: "Liberation Mono", monospace;
    border: 1px solid #bbb;
    box-sizing: border-box;
  }

  .macro {
    height: 15px;
    background: #dcc0c4;
  }

  .script input {
    display: block;
    width: 100%;
    height: 16px;
    padding: 0 3px;
    border-top: 1px solid #555;
    background: #f3f3f3;
    color: #777;
    font-size: 9px;
  }

  .prompt {
    display: flex;
    flex: 1;
    flex-direction: column;
    gap: 6px;
    padding: 2px 0 0 3px;
    border-left: 1px solid #222;
    white-space: nowrap;
  }

  .coords {
    width: 325px;
  }

  .coord_row, .tag_row, .row, .filters {
    display: flex;
    align-items: center;
    height: 18px;
  }

  .coord_row label {
    width: 9px;
    margin-left: 2px;
  }

  .coord_row input {
    width: 41px;
    height: 13px;
    margin-right: 10px;
    padding-left: 2px;
    background: #5a5a5a;
    color: #8b8b8b;
  }

  .coord_row span {
    margin-left: 2px;
  }

  .coord_row .active, .tag_row .active {
    width: 15px;
    height: 15px;
    border-radius: 2px;
    background: #5c83bf;
  }

  .coord_row .dim {
    margin: 0 2px 0 3px;
    color: #222;
  }

  .tag_row {
    padding-left: 226px;
  }

  .tag {
    margin-left: 4px;
  }

  .playback {
    width: 90px;
    margin-right: 8px;
  }

  .playback .row {
    height: 17px;
  }

  .playback button {
    width: 18px;
    height: 17px;
  }

  .playback input {
    width: 51px;
    height: 12px;
    margin-right: 2px;
    padding-left: 3px;
    background: linear-gradient(90deg, #666 45px, #4a4a4a 45px);
  }

  .setkeys {
    width: 30px;
    height: 31px;
    margin-right: 4px;
    background: #626262;
  }

  .keys {
    display: grid;
    grid-template-columns: 33px 84px;
    gap: 2px 4px;
    margin-right: 6px;
  }

  .keys > button, .fill {
    height: 14px;
    background: #606060;
  }

  .keys .select {
    width: 100%;
  }

  .filters {
    height: 14px;
  }

  .plain {
    width: 20px;
    height: 14px;
  }

  .fill {
    flex: 1;
  }

  .nav {
    display: grid;
    grid-template-columns: repeat(4, 17px);
  }

  .nav button {
    width: 17px;
    height: 17px;
  }

  .taskbar {
    display: flex;
    height: 30px;
    background: linear-gradient(90deg, #d3e9f2, #cfe3ee 60%, #dfdfee);
    color: #222;
  }

  .start {
    width: 35px;
    background: #d6edf5;
  }

  .search {
    display: flex;
    align-items: center;
    width: 210px;
    padding-left: 9px;
    gap: 8px;
    box-sizing: border-box;
    background: #fff;
  }

  .search input {
    flex: 1;
    font-size: 12px;
  }

  .search input::placeholder {
    color: #444;
    opacity: 1;
  }

  .app_button {
    width: 36px;
  }

  .max {
    border-bottom: 2px solid #1e78d0;
    background: #eef7fa;
  }

  .ps {
    border-bottom: 2px solid #f27a1a;
    background: #f1b184;
  }

  .ps span {
    width: 15px;
    border-radius: 3px;
    background: #0b1c33;
    color: #3aa5f5;
    font-size: 9px;
    font-weight: 700;
    line-height: 15px;
  }

  .tray {
    display: flex;
    align-items: center;
    gap: 4px;
    margin-left: auto;
    padding-right: 16px;
  }

  .weather, .ime {
    font-size: 11px;
  }

  .weather {
    margin-right: 10px;
  }

  time {
    margin-right: 5px;
    font-size: 9px;
    line-height: 13px;
    text-align: center;
  }
</style>
